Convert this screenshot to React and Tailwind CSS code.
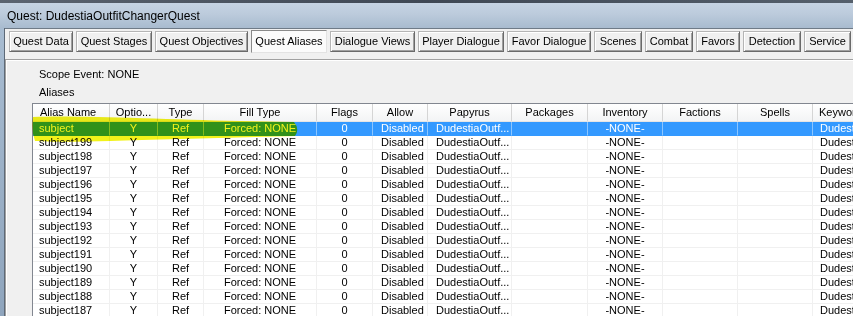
import React from "react";

const tabs = [
  { label: "Quest Data", w: "w-[64px]" },
  { label: "Quest Stages", w: "w-[76px]" },
  { label: "Quest Objectives", w: "w-[93px]" },
  { label: "Quest Aliases", w: "w-[76px]", active: true },
  { label: "Dialogue Views", w: "w-[85px]" },
  { label: "Player Dialogue", w: "w-[86px]" },
  { label: "Favor Dialogue", w: "w-[84px]" },
  { label: "Scenes", w: "w-[48px]" },
  { label: "Combat", w: "w-[48px]" },
  { label: "Favors", w: "w-[44px]" },
  { label: "Detection", w: "w-[58px]" },
  { label: "Service", w: "w-[47px]" },
];

const columns = [
  { key: "name", label: "Alias Name", w: "w-[77px]", head: "justify-start pl-[7px]", cell: "justify-start pl-[6px]" },
  { key: "opt", label: "Optio...", w: "w-[48px]", head: "justify-center", cell: "justify-center" },
  { key: "type", label: "Type", w: "w-[46px]", head: "justify-center", cell: "justify-center" },
  { key: "fill", label: "Fill Type", w: "w-[113px]", head: "justify-center", cell: "justify-center" },
  { key: "flags", label: "Flags", w: "w-[56px]", head: "justify-center", cell: "justify-center" },
  { key: "allow", label: "Allow", w: "w-[55px]", head: "justify-center", cell: "justify-start pl-[8px]" },
  { key: "papyrus", label: "Papyrus", w: "w-[84px]", head: "justify-center", cell: "justify-start pl-[8px]" },
  { key: "packages", label: "Packages", w: "w-[76px]", head: "justify-center", cell: "justify-center" },
  { key: "inv", label: "Inventory", w: "w-[75px]", head: "justify-center", cell: "justify-center" },
  { key: "factions", label: "Factions", w: "w-[75px]", head: "justify-center", cell: "justify-center" },
  { key: "spells", label: "Spells", w: "w-[75px]", head: "justify-center", cell: "justify-center" },
  { key: "keyw", label: "Keywords", w: "w-[110px]", head: "justify-start pl-[6px]", cell: "justify-start pl-[7px]" },
];

const names = ["subject"];
for (let i = 199; i >= 187; i--) names.push("subject" + i);

const rows = names.map((n) => ({
  name: n,
  opt: "Y",
  type: "Ref",
  fill: "Forced: NONE",
  flags: "0",
  allow: "Disabled",
  papyrus: "DudestiaOutf...",
  packages: "",
  inv: "-NONE-",
  factions: "",
  spells: "",
  keyw: "DudestiaOutfitChangerQuest",
}));

function Tab({ label, w, active }) {
  if (active) {
    return (
      <div
        className={`${w} h-[23px] -mt-[1px] flex items-center justify-center bg-[#fbfbfb] border border-t-[#8a8a8a] border-l-[#8a8a8a] border-b-[#e3e3e3] border-r-[#e3e3e3] text-[11px] text-black`}
      >
        {label}
      </div>
    );
  }
  return (
    <div
      className={`${w} h-[21px] flex items-center justify-center bg-[#f0f0f0] border border-t-[#b5b5b5] border-l-[#b5b5b5] border-b-[#6a6a6a] border-r-[#6a6a6a] shadow-[inset_1px_1px_0_#ffffff,inset_-1px_-1px_0_#a0a0a0] text-[11px] text-black`}
    >
      {label}
    </div>
  );
}

export default function App() {
  return (
    <div
      className="relative w-[853px] h-[316px] overflow-hidden flex flex-col bg-[#f0f0f0] text-black"
      style={{ fontFamily: '"Liberation Sans", Arial, sans-serif' }}
    >
      {/* title bar */}
      <div className="h-[28px] shrink-0 flex flex-col bg-gradient-to-b from-[#c8d6e5] via-[#bccbdc] to-[#a8bbcf]">
        <div className="h-[3px] bg-gradient-to-r from-[#5b6470] via-[#3f4854] to-[#55606c]" />
        <div className="flex-1 flex items-center pl-[7px] text-[12px] text-black">
          Quest: DudestiaOutfitChangerQuest
        </div>
      </div>

      <div className="flex-1 flex min-h-0">
        {/* left window frame */}
        <div className="w-[5px] shrink-0 bg-gradient-to-b from-[#a8bcd1] to-[#8fa5bd] border-r border-[#5d6977]" />

        {/* client */}
        <div className="flex-1 flex flex-col border-t border-[#6f7b88] bg-[#f0f0f0] min-w-0">
          <div className="flex gap-[3px] pl-[4px] pt-[2px] items-start shrink-0">
            {tabs.map((t) => (
              <Tab key={t.label} {...t} />
            ))}
          </div>

          <div className="mt-[6px] flex-1 flex flex-col border-t border-l border-[#a0a0a0] shadow-[inset_1px_1px_0_#ffffff]">
            <div className="pl-[33px] pt-[7px] text-[11px] leading-[14px]">Scope Event: NONE</div>
            <div className="pl-[33px] mt-[4px] text-[11px] leading-[14px]">Aliases</div>

            <div className="pl-[26px] mt-[4px]">
              <div className="w-[1000px] border-t border-l border-[#828790] bg-white">
                {/* header */}
                <div className="flex h-[18px] bg-gradient-to-b from-[#ffffff] to-[#f3f4f5] border-b border-[#e5e5e5]">
                  {columns.map((c) => (
                    <div
                      key={c.key}
                      className={`${c.w} ${c.head} shrink-0 flex items-center border-r border-[#d5d5d5] text-[11px] whitespace-nowrap overflow-hidden`}
                    >
                      {c.label}
                    </div>
                  ))}
                </div>

                {/* rows */}
                {rows.map((r, i) => {
                  const sel = i === 0;
                  return (
                    <div
                      key={r.name}
                      className={`flex h-[14px] ${sel ? "bg-[#3399ff] text-white" : "bg-white text-black"}`}
                    >
                      {columns.map((c) => (
                        <div
                          key={c.key}
                          className={`${c.w} ${c.cell} shrink-0 flex items-center border-r border-b text-[11px] leading-[13px] whitespace-nowrap overflow-hidden ${
                            sel ? "border-r-[#8cc6ff] border-b-[#3399ff]" : "border-[#f0f0f0]"
                          }`}
                        >
                          {r[c.key]}
                        </div>
                      ))}
                    </div>
                  );
                })}
              </div>
            </div>
          </div>
        </div>
      </div>

      {/* highlighter stroke over the first row */}
      <svg
        className="absolute inset-0 pointer-events-none mix-blend-multiply"
        width="853"
        height="316"
        viewBox="0 0 853 316"
      >
        <path
          d="M33,117 C70,115 160,119 240,121 L294,122 Q300,129 295,136 C250,137 160,139 110,141 C80,142 50,142 35,141 Q31,130 33,117 Z"
          fill="#f2f21a"
        />
      </svg>
    </div>
  );
}
